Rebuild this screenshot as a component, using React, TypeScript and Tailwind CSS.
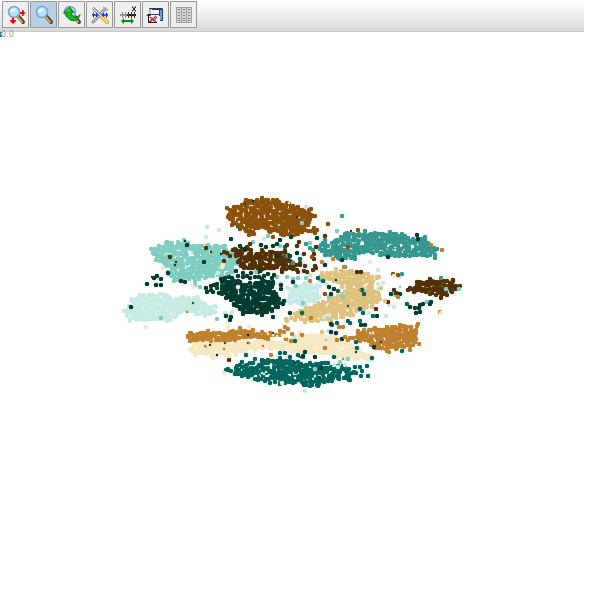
import React from "react";

type Point = [number, number];
type Cluster = { color: string; keep: number; outline: Point[] };

const BROWN_5 = "#543005";
const BROWN_4 = "#8c510a";
const BROWN_3 = "#bf812d";
const BROWN_2 = "#dfc27d";
const BROWN_1 = "#f6e8c3";
const TEAL_1 = "#c7eae5";
const TEAL_2 = "#80cdc1";
const TEAL_3 = "#35978f";
const TEAL_4 = "#01665e";
const TEAL_5 = "#003c30";

const clusters: Cluster[] = [
  { color: TEAL_2, keep: 0.95, outline: [[151,249],[166,243],[184,240],[188,243],[208,245],[225,246],[226,250],[240,252],[240,262],[233,272],[222,276],[205,278],[195,281],[174,281],[168,272],[166,266],[156,260]] },
  { color: BROWN_4, keep: 0.97, outline: [[227,208],[242,205],[246,200],[262,198],[268,200],[277,200],[289,204],[298,207],[311,209],[309,213],[315,216],[309,222],[317,230],[315,233],[298,234],[283,235],[270,232],[258,228],[254,234],[249,235],[246,231],[232,225],[228,217]] },
  { color: BROWN_5, keep: 0.9, outline: [[233,250],[247,247],[257,254],[262,250],[285,251],[288,258],[290,267],[282,272],[270,268],[258,272],[244,268],[238,262]] },
  { color: BROWN_5, keep: 0.7, outline: [[288,257],[300,263],[305,266],[304,271],[298,272],[290,268]] },
  { color: TEAL_3, keep: 0.95, outline: [[437,249],[435,258],[405,256],[380,255],[360,252],[355,259],[340,259],[325,255],[317,247],[325,240],[335,241],[345,234],[365,231],[390,232],[408,238],[425,237],[428,243]] },
  { color: TEAL_1, keep: 0.98, outline: [[124,311],[129,307],[132,301],[140,295],[166,295],[183,297],[198,298],[203,303],[216,307],[215,312],[205,316],[190,311],[177,315],[167,321],[130,321]] },
  { color: TEAL_5, keep: 0.96, outline: [[219,293],[222,282],[232,281],[250,283],[262,279],[273,282],[276,294],[283,304],[272,311],[262,315],[243,314],[234,305],[226,298]] },
  { color: TEAL_1, keep: 0.95, outline: [[287,288],[305,283],[317,285],[319,297],[305,305],[290,303]] },
  { color: BROWN_2, keep: 0.96, outline: [[286,319],[300,311],[318,303],[332,297],[345,291],[341,283],[322,279],[322,273],[336,269],[350,271],[379,277],[372,283],[378,292],[380,299],[372,307],[350,315],[330,321],[305,322]] },
  { color: BROWN_1, keep: 0.98, outline: [[190,349],[194,342],[215,341],[285,340],[300,333],[335,335],[352,345],[371,356],[368,360],[345,359],[310,353],[280,350],[255,350],[235,352],[213,358],[195,354]] },
  { color: BROWN_3, keep: 1, outline: [[188,337],[190,333],[208,331],[220,333],[240,328],[262,332],[280,331],[268,339],[235,340],[190,341]] },
  { color: BROWN_3, keep: 0.92, outline: [[353,338],[358,331],[375,328],[400,325],[418,324],[419,344],[404,347],[389,352],[375,348],[360,341]] },
  { color: TEAL_4, keep: 0.93, outline: [[226,370],[240,365],[262,361],[280,358],[298,362],[310,363],[325,363],[345,367],[354,372],[350,380],[332,381],[318,386],[280,384],[265,381],[242,376]] },
  { color: BROWN_5, keep: 1, outline: [[411,289],[417,282],[430,279],[453,280],[460,286],[452,292],[441,298],[430,294],[415,291]] },
];

const strays: { color: string; points: Point[] }[] = [
  { color: TEAL_1, points: [[207,227],[219,230],[206,237],[306,207],[264,239],[383,283],[378,270],[389,305],[394,307],[386,316],[369,313],[225,313],[232,312],[229,315],[218,273],[320,286],[326,284],[331,289],[329,315],[324,317],[294,336],[372,360],[334,365],[338,367],[345,365],[305,391],[392,294],[400,277],[131,299],[378,289],[310,275],[328,331],[315,302],[287,301],[378,284],[280,283]] },
  { color: TEAL_2, points: [[302,223],[268,236],[253,242],[280,246],[256,272],[287,277],[293,279],[298,278],[277,277],[303,303],[329,297],[296,286],[161,318],[195,285],[217,319],[200,287],[315,369],[348,359],[446,289],[459,289],[427,302],[343,297],[310,243],[337,231],[340,362],[395,295],[306,278],[320,280]] },
  { color: TEAL_3, points: [[342,216],[306,244],[310,248],[313,250],[402,234],[403,237],[293,263],[287,256],[345,267],[402,274],[441,278]] },
  { color: TEAL_4, points: [[280,353],[285,353],[255,359],[242,362],[228,369],[298,355],[303,357],[246,355],[295,341],[332,325],[337,323],[350,323],[348,321],[363,313],[373,316],[360,309],[364,294],[338,291],[362,290],[356,342],[407,304],[355,367],[360,367],[367,366],[362,371],[368,376],[361,376],[356,373],[372,358],[357,348],[402,351],[334,357],[290,357],[360,321],[323,281],[318,278],[285,247],[300,259],[302,313]] },
  { color: TEAL_5, points: [[231,239],[280,240],[291,237],[277,244],[273,246],[261,245],[266,247],[277,256],[290,256],[297,253],[240,246],[245,249],[325,265],[317,238],[417,235],[418,239],[388,257],[342,260],[187,245],[204,262],[168,273],[154,278],[161,279],[157,276],[147,284],[156,285],[161,285],[131,307],[181,281],[185,282],[206,288],[211,286],[207,292],[211,290],[213,292],[217,288],[214,285],[217,284],[221,279],[225,278],[229,277],[232,278],[231,317],[230,320],[226,316],[273,317],[281,285],[281,289],[284,301],[238,276],[243,273],[243,277],[247,276],[250,278],[251,273],[255,277],[260,271],[259,277],[264,276],[268,274],[272,278],[236,271],[274,275],[293,282],[290,313],[321,368],[336,333],[331,324],[303,356],[305,352],[315,357],[329,287],[334,289],[331,294],[391,294],[399,294],[377,316],[361,325],[365,325],[374,347],[342,339],[410,307],[415,308],[420,305],[423,304],[419,308],[416,313],[420,312],[431,302],[430,304],[331,332],[400,294]] },
  { color: BROWN_5, points: [[250,244],[287,245],[297,246],[304,254],[314,254],[315,266],[313,270],[307,272],[314,259],[299,242],[206,248],[224,252],[224,261],[170,257],[227,253],[230,256],[316,247],[325,236],[357,272],[361,272],[396,293],[394,290],[388,302],[410,288],[408,290],[414,292],[229,360],[316,268],[235,249],[237,254],[376,309]] },
  { color: BROWN_4, points: [[328,224],[273,237],[348,247],[393,274],[398,275],[312,257],[325,294],[358,230]] },
  { color: BROWN_3, points: [[431,245],[442,250],[333,259],[344,267],[310,281],[322,262],[285,327],[288,329],[284,332],[292,334],[280,335],[286,339],[291,341],[272,334],[265,338],[339,327],[343,327],[337,340],[348,340],[302,335],[325,348],[271,355],[410,350],[398,297],[311,318],[345,337],[350,338],[440,312]] },
  { color: BROWN_2, points: [[287,321],[377,277],[385,301],[381,288],[322,332]] },
  { color: BROWN_1, points: [[163,268],[146,327],[193,287],[222,267],[223,265],[238,287],[370,262],[394,276],[441,313],[224,373],[228,327],[249,327],[229,355],[282,383],[295,348],[236,355],[292,346]] },
];

const specks: { color: string; points: Point[] }[] = [
  { color: TEAL_1, points: [[185,260],[192,252],[239,222],[289,203],[388,246],[395,250],[290,375],[345,289],[262,373],[264,374],[266,372]] },
  { color: TEAL_2, points: [[279,225],[353,243],[400,287],[326,340],[206,347]] },
  { color: TEAL_4, points: [[237,227],[225,343],[248,343],[300,357],[381,342],[348,306],[193,303]] },
  { color: TEAL_5, points: [[253,201],[185,241],[175,265],[221,254],[336,280],[248,335],[295,363],[217,355],[320,378],[356,352]] },
  { color: BROWN_5, points: [[245,204],[297,217],[211,252],[176,262],[351,231],[273,333],[210,345],[152,277]] },
  { color: BROWN_3, points: [[187,312],[258,309],[224,349],[263,346],[343,359],[249,343],[205,346],[360,290]] },
  { color: BROWN_1, points: [[295,378],[315,376],[348,344],[370,333],[178,270],[256,376],[268,334],[273,335],[277,336],[282,335],[286,337]] },
];

function inside([x, y]: Point, outline: Point[]) {
  let hit = false;
  for (let i = 0, j = outline.length - 1; i < outline.length; j = i++) {
    const [ax, ay] = outline[i];
    const [bx, by] = outline[j];
    if (ay > y !== by > y && x < ((bx - ax) * (y - ay)) / (by - ay) + ax) hit = !hit;
  }
  return hit;
}

function scatter({ keep, outline }: Cluster, seed: number) {
  let state = seed * 7919 + 17;
  const random = () => {
    state = (state * 1664525 + 1013904223) % 4294967296;
    return state / 4294967296;
  };
  const xs = outline.map((p) => p[0]);
  const ys = outline.map((p) => p[1]);
  const result: Point[] = [...outline];
  for (let y = Math.min(...ys); y <= Math.max(...ys); y += 3) {
    for (let x = Math.min(...xs); x <= Math.max(...xs); x += 3) {
      const kept = random() < keep;
      const point: Point = [Math.round(x + random() * 2 - 1), Math.round(y + random() * 2 - 1)];
      if (kept && inside([x, y], outline)) result.push(point);
    }
  }
  return result;
}

const dots = (points: Point[]) => points.map(([x, y]) => `M${x} ${y}h0`).join("");

function ScatterPlot() {
  return (
    <svg
      viewBox="0 32 600 568"
      className="block w-full overflow-visible"
      role="img"
      aria-label="Scatter plot"
      fill="none"
      strokeWidth="4.6"
      strokeLinecap="round"
    >
      <text x="1" y="37" fontSize="8" fill="#a0a0a0" className="font-['DejaVu_Sans',sans-serif]">0.0</text>
      <path d="M0 32h2v1h-1v2h1v2h-2z" fill="#3d7f79" />
      {clusters.map((cluster, i) => (
        <path key={i} d={dots(scatter(cluster, i + 1))} stroke={cluster.color} />
      ))}
      {strays.map(({ color, points }) => (
        <path key={color} d={dots(points)} stroke={color} />
      ))}
      {specks.map(({ color, points }) => (
        <path key={color} d={dots(points)} stroke={color} strokeWidth="2.5" />
      ))}
    </svg>
  );
}

function Magnifier() {
  return (
    <>
      <path d="M16 15l5 6" stroke="#4f4438" strokeWidth="4" strokeLinecap="round" />
      <path d="M16 16l4 5" stroke="#e5a94c" strokeWidth="2" strokeLinecap="round" />
      <circle cx="12" cy="11" r="5.5" fill="#b3e1fb" stroke="#7ba6cc" strokeWidth="1.5" />
      <path d="M8 11a4 4 0 0 1 6-3c-1 2-3 4-6 3z" fill="#f1fbff" />
    </>
  );
}

const tools: { label: string; active?: boolean; icon: React.ReactNode }[] = [
  {
    label: "Zoom and pan",
    icon: (
      <>
        <Magnifier />
        <path d="M18 11h2v-2h1l2 3-2 3h-1v-2h-2zM10 17h2v2h2v1l-3 3-3-3v-1h2z" fill="#f00" />
      </>
    ),
  },
  { label: "Zoom", active: true, icon: <Magnifier /> },
  {
    label: "Zoom back",
    icon: (
      <>
        <Magnifier />
        <path d="M5.5 12l6-6 4.500 5.500h-2.500c0 4 3 6 6.500 4l2-2c-1 5-5 7-8 6-4-1-6-4-6-7.500z" fill="#19b51d" stroke="#08750f" />
        <path d="M9 10.500l2.500-2.500" stroke="#83ed70" />
      </>
    ),
  },
  {
    label: "Settings",
    icon: (
      <>
        <path d="M7 21l5-5 7-8" stroke="#8a8a8a" strokeWidth="3" strokeLinecap="round" />
        <path d="M7 21l5-5 7-8" stroke="#e2e2e2" strokeLinecap="round" />
        <path d="M18 6v3h4" stroke="#aaa" strokeWidth="2" />
        <path d="M7 7l9 9" stroke="#8a8a8a" strokeWidth="3" />
        <path d="M7 7l9 9" stroke="#fff" />
        <path d="M16 16l5 5" stroke="#d8ae38" strokeWidth="4" strokeLinecap="round" />
        <path d="M16 16l5 5" stroke="#f8da76" strokeWidth="2" strokeLinecap="round" />
        <path d="M6 14h6M16 14h6" stroke="#0735e8" strokeWidth="1.500" />
        <path d="M7.500 11.500v5M10.500 12v4M17.500 12v4M20.500 11.500v5" stroke="#0735e8" />
      </>
    ),
  },
  {
    label: "Scale X axis",
    icon: (
      <g>
        <path d="M6 14h8" stroke="#999" strokeWidth="2" />
        <path d="M13 14h9" stroke="#222" strokeWidth="2" />
        <path d="M8.500 11v6M11.500 11v6" stroke="#888" />
        <path d="M14.500 11v6M17.500 11v6M20.500 11v6" stroke="#333" />
        <path d="M18.500 6l3 4M21.500 6l-3 4M18 6h1M21 6h1M18 10h1M21 10h1" stroke="#111" />
        <path d="M7 20l3-3v2h7v-2l3 3-3 3v-2h-7v2z" fill="#078c13" />
      </g>
    ),
  },
  {
    label: "Save plot",
    icon: (
      <>
        <path d="M7 7h13l1 1v12h-3v-5H7z" fill="#28396f" />
        <path d="M7 8h3v5H7z" fill="#a9bcdf" />
        <path d="M9 9h8v4H9z" fill="#f4f6fc" />
        <path d="M18 9h2v10h-2z" fill="#7f9ad0" />
        <path d="M8 14h9v8H8z" fill="#f4f4f8" />
        <path d="M6.500 13v8.500H15M4.500 15l2-2 2 2" stroke="#111" />
        <path d="M7 21l3-3 2 2 3-4" stroke="#2438ed" />
        <path d="M8 16l6 5M8 21l6-6" stroke="#f02020" strokeWidth="1.500" />
      </>
    ),
  },
  {
    label: "Show table",
    icon: (
      <g shapeRendering="crispEdges">
        <path d="M6 6h16v16H6z" fill="#d0d0d0" />
        <path d="M6.500 6.500h15v15h-15zM11.500 6v16M16.500 6v16" stroke="#a0a0a0" />
        <path d="M8 8.500h2M13 8.500h2M18 8.500h2M8 11.500h2M13 11.500h2M18 11.500h2M8 14.500h2M13 14.500h2M18 14.500h2M8 17.500h2M13 17.500h2M18 17.500h2M8 19.500h2M13 19.500h2M18 19.500h2" stroke="#858585" />
      </g>
    ),
  },
];

function ToolButton({ label, active, icon }: (typeof tools)[number]) {
  return (
    <button
      type="button"
      aria-label={label}
      aria-pressed={!!active}
      className={`size-[27px] border border-[#999] ${active ? "bg-[#b8cfe5]" : "bg-[#eeeeee]"}`}
    >
      <svg viewBox="1 1 25 25" fill="none" className="block size-full">
        {icon}
      </svg>
    </button>
  );
}

export default function App() {
  return (
    <div className="min-h-screen bg-white">
      <div
        role="toolbar"
        aria-label="Plot tools"
        className="mr-4 flex h-8 gap-px border-b border-[#c8c8c8] bg-linear-to-b from-white to-[#dadada] px-0.5 pt-px"
      >
        {tools.map((tool) => (
          <ToolButton key={tool.label} {...tool} />
        ))}
      </div>
      <main>
        <ScatterPlot />
      </main>
    </div>
  );
}
